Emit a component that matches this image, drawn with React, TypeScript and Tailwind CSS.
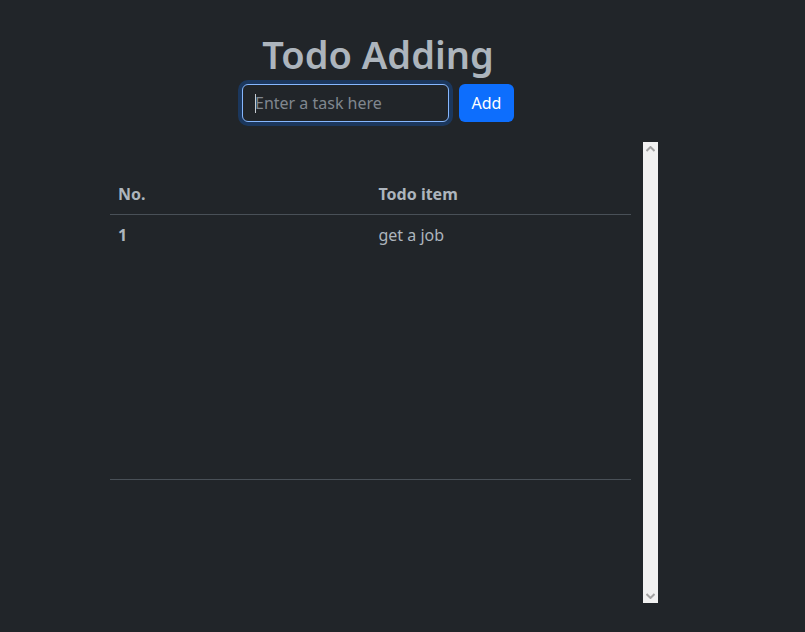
import React from "react";

export default function App() {
  const font = { fontFamily: '"Noto Sans", "Open Sans", sans-serif' };
  return (
    <div className="min-h-[632px] w-full bg-[#212529] text-[#adb5bd]" style={font}>
      <div className="ml-[100px] flex w-[558px] flex-col items-center pt-[30px]">
        <div className="flex flex-col items-center pr-[2px]">
          <h1 className="m-0 text-[38px] font-semibold leading-[48px] text-[#adb5bd]">Todo Adding</h1>
          <div className="mt-[6px] flex items-center gap-[10px]">
            <div className="relative">
              <input
                className="h-[38px] w-[207px] rounded-[6px] border border-[#86b7fe] bg-[#212529] px-[12px] text-[16px] text-[#dee2e6] shadow-[0_0_0_4px_rgba(13,110,253,0.25)] outline-none placeholder:text-[#80878f]"
                placeholder="Enter a task here"
                style={font}
              />
              <span className="absolute left-[13px] top-[10px] h-[19px] w-px bg-[#c8cdd2]" />
            </div>
            <button className="h-[38px] w-[55px] rounded-[6px] bg-[#0d6efd] text-[16px] text-white">Add</button>
          </div>
        </div>
        <div className="mt-[20px] flex h-[461px] w-full">
          <div className="flex-1 pl-[10px] pr-[12px] pt-[31px]">
            <table className="w-full border-collapse text-[16px]">
              <thead>
                <tr className="h-[41px] border-b border-[#495057]">
                  <th className="w-1/2 px-[8px] pt-[2px] text-left align-middle font-bold text-[#adb5bd]">No.</th>
                  <th className="w-1/2 px-[8px] pt-[2px] text-left align-middle font-bold text-[#adb5bd]">Todo item</th>
                </tr>
              </thead>
              <tbody>
                <tr className="h-[265px] border-b border-[#495057]">
                  <td className="px-[8px] py-[8px] align-top font-bold">1</td>
                  <td className="px-[8px] py-[8px] align-top">get a job</td>
                </tr>
              </tbody>
            </table>
          </div>
          <div className="flex w-[15px] flex-col items-center justify-between bg-[#f1f1f1] py-[4px]">
            <svg width="9" height="6" viewBox="0 0 9 6">
              <path d="M0.5 5 L4.5 1 L8.5 5" stroke="#a3a3a3" strokeWidth="2" fill="none" />
            </svg>
            <svg width="9" height="6" viewBox="0 0 9 6">
              <path d="M0.5 1 L4.5 5 L8.5 1" stroke="#a3a3a3" strokeWidth="2" fill="none" />
            </svg>
          </div>
        </div>
      </div>
    </div>
  );
}
